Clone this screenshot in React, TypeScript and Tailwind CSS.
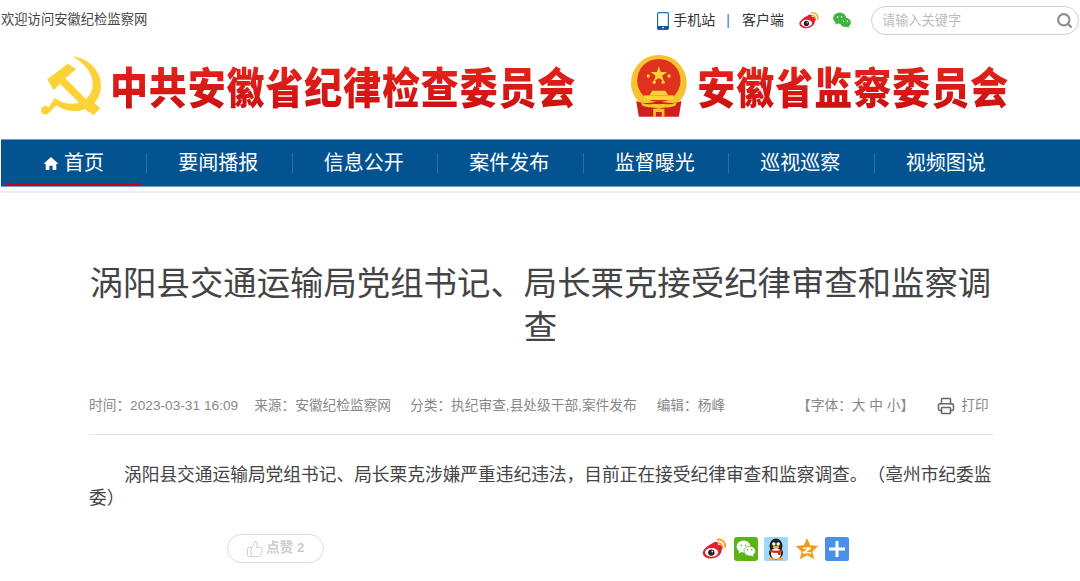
import { Printer, Search, ThumbsUp } from "lucide-react";

const NAV_ITEMS = ["要闻播报", "信息公开", "案件发布", "监督曝光", "巡视巡察", "视频图说"];

function WeiboIcon({ className }: { className?: string }) {
  return (
    <svg viewBox="0 0 26 24" className={className}>
      <path
        d="M10.5 6.2c2.8-2 5-2.1 5.8-1 .5.7.4 1.700.1 2.800 1.500-.5 4.700-.9 5.200 1.500.4 2-1 3.200-1.200 3.500.1 5.500-6.300 8.800-11 8.800C5 21.800.8 19.600.8 15.800.8 12.500 6.800 7.800 10.500 6.200z"
        fill="#e0212b"
      />
      <ellipse cx="10" cy="15.500" rx="6.800" ry="4.600" fill="#fff" />
      <circle cx="9.700" cy="15.700" r="3.300" fill="#222" />
      <circle cx="10.700" cy="14.700" r="0.900" fill="#fff" />
      <path d="M16.500 2.200c4.500-.6 8.300 3 7.600 7.800" fill="none" stroke="#f5a623" strokeWidth="2" strokeLinecap="round" />
      <path d="M17.300 5.800c2.200-.3 3.700 1.400 3.300 3.400" fill="none" stroke="#f5a623" strokeWidth="1.600" strokeLinecap="round" />
    </svg>
  );
}

function WechatBubbles({ className, back, front, eye }: { className?: string; back: string; front: string; eye: string }) {
  return (
    <svg viewBox="0 0 24 22" className={className}>
      <ellipse cx="9" cy="8" rx="8.500" ry="7.300" fill={back} />
      <path d="M4 12.500l-1 4 4-2z" fill={back} />
      <ellipse cx="16.500" cy="13.500" rx="7" ry="6" fill={front} stroke={eye === "#fff" ? "none" : eye} strokeWidth="0.800" />
      <path d="M20 17.500l1.500 3-3.500-1.500z" fill={front} />
      <circle cx="6.300" cy="6.500" r="1" fill={eye} />
      <circle cx="11.500" cy="6.500" r="1" fill={eye} />
      <circle cx="14" cy="12" r="0.900" fill={eye} />
      <circle cx="19" cy="12" r="0.900" fill={eye} />
    </svg>
  );
}

function PhoneIcon() {
  return (
    <svg viewBox="0 0 12 18" className="h-[18px] w-3">
      <rect x="0.600" y="0.600" width="10.800" height="16.800" rx="1.200" fill="#fff" stroke="#1f6fb5" strokeWidth="1.200" />
      <rect x="0.600" y="14" width="10.800" height="3.400" fill="#12589a" />
      <rect x="5" y="15.200" width="2" height="1" fill="#fff" />
    </svg>
  );
}

function HammerSickle() {
  return (
    <svg viewBox="28 24 190 192" className="mb-2 h-16 w-[63px] shrink-0">
      <g fill="#fdd237">
        <path d="M125 30c50 5 88 45 87 90-1 22-9 38-20 52l18 14-21 22-22-20c-30 14-65 8-90-10l-20 22-8-8 24-36c26 20 62 24 88 8 30-20 34-60 12-92-10-16-26-30-48-42z" />
        <path d="M50 100l62-47 25 16-33 28 88 88-16 16-88-88-18 20z" />
        <circle cx="44" cy="193" r="13" />
      </g>
    </svg>
  );
}

function NationalEmblem() {
  return (
    <svg viewBox="30 15 175 195" className="mb-2 h-[64px] w-[58px] shrink-0">
      <circle cx="117" cy="103" r="85" fill="#f6c32f" />
      <circle cx="117" cy="96" r="66" fill="#e0301e" />
      <path d="M117 52l6 18h19l-15 11 6 18-16-11-16 11 6-18-15-11h19z" fill="#fbd23a" />
      <g fill="#fbd23a">
        <circle cx="85" cy="82" r="5" />
        <circle cx="148" cy="82" r="5" />
        <circle cx="103" cy="101" r="5" />
        <circle cx="130" cy="101" r="5" />
        <path d="M97 127h40l8 14H89z" />
        <rect x="72" y="141" width="90" height="14" />
      </g>
      <path d="M48 158c20 8 40 8 69 2 29 6 49 6 69-2l-8 48H56z" fill="#cf1f1c" />
      <path d="M62 160c14 14 30 4 55 8 25-4 41 6 55-8l-4 12c-16 8-34 4-51 10-17-6-35-2-51-10z" fill="#f6c32f" />
      <path d="M100 182h34v24h-8v-14h-18v14h-8z" fill="#f6c32f" />
    </svg>
  );
}

function QqIcon() {
  return (
    <svg viewBox="0 0 24 24" className="size-6">
      <rect width="24" height="24" rx="2" fill="#9fd8f8" />
      <ellipse cx="12" cy="9" rx="6.500" ry="7.500" fill="#222" />
      <ellipse cx="12" cy="16" rx="7" ry="6.500" fill="#222" />
      <ellipse cx="12" cy="16.500" rx="5" ry="5.500" fill="#fff" />
      <circle cx="9.800" cy="7" r="1.700" fill="#fff" />
      <circle cx="14.200" cy="7" r="1.700" fill="#fff" />
      <ellipse cx="12" cy="10.200" rx="3.200" ry="1.400" fill="#f5b324" />
      <path d="M6 12.500c4 1.800 8 1.800 12 0v2.200c-4 1.600-8 1.600-12 0z" fill="#d9261c" />
      <rect x="14" y="14" width="2.500" height="4" fill="#d9261c" />
      <ellipse cx="8" cy="22" rx="3" ry="1.400" fill="#f5a623" />
      <ellipse cx="16" cy="22" rx="3" ry="1.400" fill="#f5a623" />
    </svg>
  );
}

function QzoneIcon() {
  return (
    <svg viewBox="0 0 24 24" className="size-6">
      <path d="M12 1l3.300 7.200 8 .9-5.900 5.300 1.700 7.900-7.100-4-7.100 4 1.700-7.900L.7 9.100l8-.9z" fill="#f39c12" />
      <path d="M8 10.500h8v1.300l-5 3.400h5.500l-.2 1.300H7.500v-1.300l5-3.400H8z" fill="#fff" />
    </svg>
  );
}

function PlusIcon() {
  return (
    <svg viewBox="0 0 24 24" className="size-6">
      <rect width="24" height="24" rx="2" fill="#4a90e8" />
      <rect x="10.500" y="4" width="3" height="16" fill="#fff" />
      <rect x="4" y="10.500" width="16" height="3" fill="#fff" />
    </svg>
  );
}

function WechatBubblesTile() {
  return (
    <div className="flex size-6 items-center justify-center rounded-[3px] bg-[#5bb318]">
      <WechatBubbles className="h-[18px] w-5" back="#fff" front="#fff" eye="#5bb318" />
    </div>
  );
}

export default function App() {
  return (
    <div className="h-[581px] overflow-hidden bg-white font-['Liberation_Sans','Noto_Sans_CJK_SC',sans-serif] text-[#333] [text-spacing-trim:space-all]">
      {/* top bar */}
      <div className="flex h-10 items-start justify-between pl-px pt-1.5 pr-px">
        <span className="mt-1 text-[13.300px] leading-5 text-[#444]">欢迎访问安徽纪检监察网</span>
        <div className="flex items-center text-[14px] text-[#333]">
          <PhoneIcon />
          <span className="ml-1">手机站</span>
          <span className="ml-[11px] text-[#3a78b0]">|</span>
          <span className="ml-3">客户端</span>
          <WeiboIcon className="ml-3.5 h-[19px] w-[22px]" />
          <WechatBubbles className="ml-3 h-[17px] w-[20px]" back="#3fb53f" front="#3fb53f" eye="#fff" />
          <div className="ml-[19px] flex h-[29px] w-[208px] items-center justify-between rounded-full border border-[#cfcfcf] pl-2.5 pr-[5px]">
            <span className="text-[13.200px] text-[#bdbdbd]">请输入关键字</span>
            <Search className="size-[17px] text-[#8c8c8c]" strokeWidth={3} />
          </div>
        </div>
      </div>

      {/* logos */}
      <div className="flex h-[99px] items-center pl-10">
        <HammerSickle />
        <span className="mb-0.5 ml-[7px] scale-y-115 bg-gradient-to-b from-[#e8261c] to-[#c70a10] bg-clip-text text-[38px] font-black leading-[50px] tracking-[0.850px] text-transparent">
          中共安徽省纪律检查委员会
        </span>
        <div className="ml-[54px]">
          <NationalEmblem />
        </div>
        <span className="mb-0.5 ml-[9px] scale-y-115 bg-gradient-to-b from-[#e8261c] to-[#c70a10] bg-clip-text text-[38px] font-black leading-[50px] tracking-[1px] text-transparent">
          安徽省监察委员会
        </span>
      </div>

      {/* nav */}
      <nav className="ml-px flex h-[48px] border-y border-y-[#6f9cc4] bg-[#045391] text-[20px] text-white">
        <div className="relative flex w-[145px] items-center justify-center">
          <svg viewBox="0 0 16 14" className="mr-[5px] h-[13px] w-4 fill-white">
            <path d="M8 0L0 7.200h2.300V14h4v-4.500h3.400V14h4V7.200H16z" />
          </svg>
          <span>首页</span>
          <span className="absolute bottom-0 left-[5px] h-[3px] w-[135px] bg-[#c8001e]" />
        </div>
        {NAV_ITEMS.map((label) => (
          <div key={label} className="flex w-[145.500px] items-center">
            <span className="h-5 w-px bg-[#2f6fa8]" />
            <span className="flex-1 pr-0.5 text-center">{label}</span>
          </div>
        ))}
      </nav>
      <div className="ml-px mt-1 h-0.5 bg-[#eeeeee]" />

      {/* article */}
      <article className="ml-[89px] w-[904px]">
        <h1 className="-ml-px mt-[69px] text-center text-[33.400px] font-normal leading-[44px] text-[#444]">
          涡阳县交通运输局党组书记、局长栗克接受纪律审查和监察调查
        </h1>

        <div className="mt-[46px] flex items-center border-b border-[#e3e3e3] pb-[18px] text-[13.700px] leading-5 text-[#888]">
          <span>时间：2023-03-31 16:09</span>
          <span className="ml-4">来源：安徽纪检监察网</span>
          <span className="ml-[19px]">分类：执纪审查,县处级干部,案件发布</span>
          <span className="ml-5">编辑：杨峰</span>
          <span className="ml-[72px]">【字体：大 中 小】</span>
          <Printer className="ml-[23px] size-[18px] text-[#666]" />
          <span className="ml-1.5">打印</span>
        </div>

        <p className="mt-[29px] indent-[35px] text-[17.720px] leading-[23px] text-[#444]">
          涡阳县交通运输局党组书记、局长栗克涉嫌严重违纪违法，目前正在接受纪律审查和监察调查。（亳州市纪委监委）
        </p>

        <div className="mt-6 flex items-center">
          <div className="ml-[138px] flex h-[29px] w-[97px] items-center justify-center gap-0.5 rounded-full border border-[#dddddd] text-[13.500px] font-bold text-[#cccccc]">
            <ThumbsUp className="size-[18px] text-[#d4d4d4]" strokeWidth={1.500} />
            <span>点赞 2</span>
          </div>
          <div className="ml-[378px] flex items-center gap-[6.500px]">
            <WeiboIcon className="h-6 w-[25px]" />
            <WechatBubblesTile />
            <QqIcon />
            <QzoneIcon />
            <PlusIcon />
          </div>
        </div>
      </article>
    </div>
  );
}
